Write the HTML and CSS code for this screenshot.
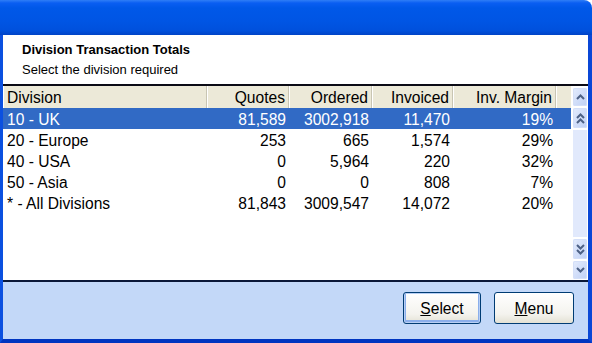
FILE: index.html
```html
<!DOCTYPE html>
<html><head>
<meta http-equiv="content-type" content="text/html; charset=UTF-8">
    <title>Division Transaction Totals</title>
    <link rel="stylesheet" href="styles.css">
</head>
<body>
    <div class="window">
        <div class="titlebar"></div>
        <div class="frame">
            <div class="intro">
                <div class="intro-title">Division Transaction Totals</div>
                <div class="intro-text">Select the division required</div>
            </div>

            <!-- Division grid with scrollbar -->
            <div class="grid">
                <div class="grid-table">
                    <div class="row head">
                        <div class="cell">Division</div>
                        <div class="cell num">Quotes</div>
                        <div class="cell num">Ordered</div>
                        <div class="cell num">Invoiced</div>
                        <div class="cell num">Inv. Margin</div>
                        <div class="cell blank"></div>
                    </div>
                    <div class="row selected">
                        <div class="cell">10 - UK</div>
                        <div class="cell num">81,589</div>
                        <div class="cell num">3002,918</div>
                        <div class="cell num">11,470</div>
                        <div class="cell num">19%</div>
                        <div class="cell"></div>
                    </div>
                    <div class="row">
                        <div class="cell">20 - Europe</div>
                        <div class="cell num">253</div>
                        <div class="cell num">665</div>
                        <div class="cell num">1,574</div>
                        <div class="cell num">29%</div>
                        <div class="cell"></div>
                    </div>
                    <div class="row">
                        <div class="cell">40 - USA</div>
                        <div class="cell num">0</div>
                        <div class="cell num">5,964</div>
                        <div class="cell num">220</div>
                        <div class="cell num">32%</div>
                        <div class="cell"></div>
                    </div>
                    <div class="row">
                        <div class="cell">50 - Asia</div>
                        <div class="cell num">0</div>
                        <div class="cell num">0</div>
                        <div class="cell num">808</div>
                        <div class="cell num">7%</div>
                        <div class="cell"></div>
                    </div>
                    <div class="row">
                        <div class="cell">* - All Divisions</div>
                        <div class="cell num">81,843</div>
                        <div class="cell num">3009,547</div>
                        <div class="cell num">14,072</div>
                        <div class="cell num">20%</div>
                        <div class="cell"></div>
                    </div>
                </div>
                <div class="scrollbar">
                    <div class="sb-button sb-head">
                        <svg width="9" height="6" viewBox="0 0 9 6"><path d="M1 5 L4.5 1.5 L8 5" fill="none" stroke="#4d6185" stroke-width="2"/></svg>
                    </div>
                    <div class="sb-button sb-page">
                        <svg width="9" height="11" viewBox="0 0 9 11"><path d="M1 5 L4.5 1.5 L8 5 M1 10 L4.5 6.5 L8 10" fill="none" stroke="#4d6185" stroke-width="2"/></svg>
                    </div>
                    <div class="sb-track"></div>
                    <div class="sb-button sb-page">
                        <svg width="9" height="11" viewBox="0 0 9 11"><path d="M1 1 L4.5 4.5 L8 1 M1 6 L4.5 9.5 L8 6" fill="none" stroke="#4d6185" stroke-width="2"/></svg>
                    </div>
                    <div class="sb-button sb-end">
                        <svg width="9" height="6" viewBox="0 0 9 6"><path d="M1 1 L4.5 4.5 L8 1" fill="none" stroke="#4d6185" stroke-width="2"/></svg>
                    </div>
                </div>
            </div>

            <div class="panel">
                <button class="xp-button default"><u>S</u>elect</button>
                <button class="xp-button"><u>M</u>enu</button>
            </div>
        </div>
    </div>
</body></html>
```

FILE: styles.css
```css
/* Windows XP style dialog */
body {
    margin: 0;
    padding: 0;
    background-color: #fff;
    font-family: "Liberation Sans", Arial, sans-serif;
}
.window {
    width: 592px;
    height: 343px;
    display: flex;
    flex-direction: column;
    overflow: hidden;
}
.titlebar {
    height: 35px;
    flex: none;
    border-top-right-radius: 8px;
    background: linear-gradient(to bottom, #2f7ef6 0, #0a5ef2 3px, #0058e8 8px, #0055e4 60%, #0050dc 88%, #0043c6 100%);
}
.frame {
    flex: 1;
    display: flex;
    flex-direction: column;
    border-left: 3px solid #0b50e0;
    border-right: 4px solid #0a47d6;
    border-bottom: 4px solid #0035c0;
    min-height: 0;
}
.intro {
    height: 49px;
    padding: 5px 0 0 19px;
    box-sizing: border-box;
    background-color: #fff;
    font-size: 13px;
    line-height: 20px;
    color: #000;
}
.intro-title {
    font-weight: bold;
}
.grid {
    flex: 1;
    display: flex;
    border-top: 2px solid #0a0a14;
    border-bottom: 2px solid #0a1838;
    background-color: #fff;
    min-height: 0;
}
.grid-table {
    flex: 1;
    font-size: 15.6px;
    color: #000;
}
.row {
    display: grid;
    grid-template-columns: 204px 82px 83px 81px 103px 1fr;
    height: 21px;
    line-height: 21px;
}
.row.head {
    height: 22px;
    line-height: 22px;
    background-color: #ece9d8;
}
.row.head .cell {
    border-right: 1px solid #c8c5b3;
    box-shadow: inset 1px 0 0 #fff;
}
.row.head .cell.blank {
    border-right: none;
}
.cell {
    padding: 1px 3px 0 4px;
    white-space: nowrap;
    overflow: hidden;
}
.num {
    text-align: right;
}
.row.selected {
    background-color: #316ac5;
    color: #fff;
}
.scrollbar {
    width: 17px;
    display: flex;
    flex-direction: column;
    align-items: flex-end;
    padding: 2px 1px 1px 0;
    box-sizing: border-box;
    gap: 2px;
}
.sb-button {
    width: 14px;
    height: 18px;
    display: flex;
    align-items: center;
    justify-content: center;
    border-radius: 2px;
    background: linear-gradient(to bottom right, #e4ecfd, #bfd0f5);
    box-shadow: inset 0 0 0 1px #d4dff8;
}
.sb-page {
    height: 20px;
}
.sb-track {
    flex: 1;
    width: 14px;
    background-color: #e1e9fc;
}
.panel {
    height: 57px;
    flex: none;
    background-color: #c3d8f8;
    display: flex;
    justify-content: flex-end;
    align-items: flex-start;
    gap: 13px;
    padding: 10px 14px 0 0;
    box-sizing: border-box;
}
.xp-button {
    height: 32px;
    width: 80px;
    font-family: "Liberation Sans", Arial, sans-serif;
    font-size: 15.6px;
    color: #000;
    border: 1px solid #003c74;
    border-radius: 3px;
    background: linear-gradient(to bottom, #ffffff, #f4f3ee 70%, #e3e1d4);
    padding: 1px 0 0;
}
.xp-button.default {
    width: 78px;
    box-shadow: inset 0 0 0 1px #b8cff4, inset 0 -1px 0 2px #8aaeeb;
}
```
